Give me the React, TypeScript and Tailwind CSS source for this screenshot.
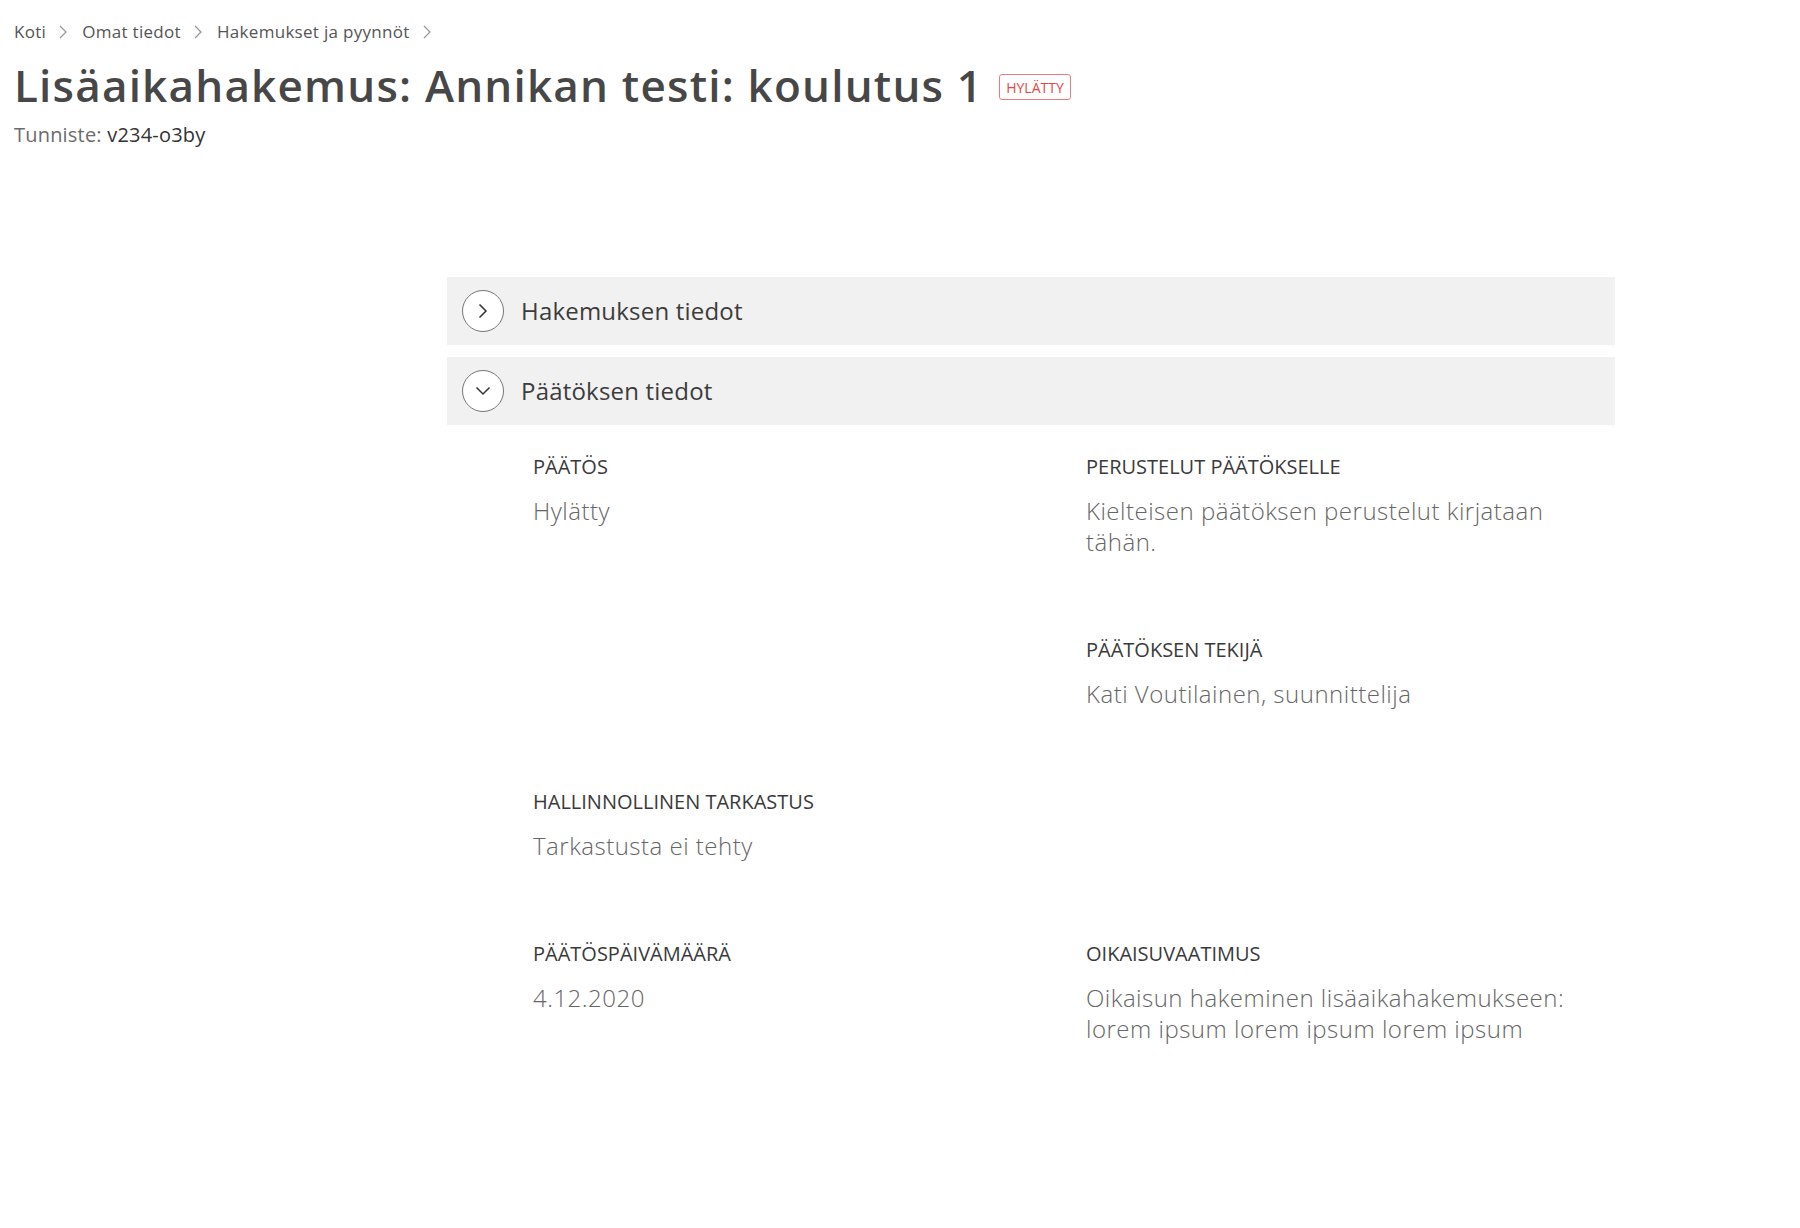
import React from "react";

const font = { fontFamily: "'Open Sans', 'Noto Sans', 'Liberation Sans', sans-serif" };

function Crumb({ label }: { label: string }) {
  return (
    <>
      <span>{label}</span>
      <svg width="10" height="16" viewBox="0 0 10 16" className="ml-[12px] mr-[14px] text-[#9a9a9a]">
        <polyline points="2,2 8,8 2,14" fill="none" stroke="currentColor" strokeWidth="1.3" />
      </svg>
    </>
  );
}

function AccordionHeader({ title, open }: { title: string; open: boolean }) {
  return (
    <div className="flex h-[68px] items-center bg-[#f1f1f1] pl-[15px]">
      <div className="flex h-[42px] w-[42px] items-center justify-center rounded-full border-[1.5px] border-[#777] bg-white">
        {open ? (
          <svg width="16" height="10" viewBox="0 0 16 10">
            <polyline points="1.5,1.5 8,8 14.5,1.5" fill="none" stroke="#333" strokeWidth="1.5" />
          </svg>
        ) : (
          <svg width="10" height="16" viewBox="0 0 10 16">
            <polyline points="1.5,1.5 8,8 1.5,14.5" fill="none" stroke="#333" strokeWidth="1.5" />
          </svg>
        )}
      </div>
      <span className="ml-[17px] text-[24px] font-medium tracking-[0.2px] text-[#3c3c3c]">{title}</span>
    </div>
  );
}

function Field({ label, children }: { label: string; children: React.ReactNode }) {
  return (
    <div>
      <div className="text-[20px] leading-[28px] font-medium uppercase text-[#3a3a3a]">{label}</div>
      <div className="mt-[14px] text-[24px] leading-[31px] font-light tracking-[0.5px] text-[#666]">
        {children}
      </div>
    </div>
  );
}

export default function App() {
  return (
    <main className="min-h-screen bg-white" style={font}>
      <div className="px-[14px] pt-[20px]">
        {/* murupolku */}
        <nav className="flex items-center text-[17px] leading-[24px] tracking-[0.3px] text-[#555]">
          <Crumb label="Koti" />
          <Crumb label="Omat tiedot" />
          <Crumb label="Hakemukset ja pyynnöt" />
        </nav>

        <div className="mt-[15px] flex items-center">
          <h1 className="text-[44px] leading-[52px] font-semibold tracking-[1.2px] text-[#474747]">
            Lisäaikahakemus: Annikan testi: koulutus 1
          </h1>
          <span className="ml-[16px] mt-[4px] flex h-[26px] items-center rounded-[3px] border border-[#f07a7a] px-[6px] text-[14px] text-[#e04848]">
            HYLÄTTY
          </span>
        </div>

        <div className="mt-[10px] text-[20px] leading-[28px] tracking-[0.2px] text-[#6b6b6b]">
          Tunniste: <span className="text-[#333]">v234-o3by</span>
        </div>
      </div>

      <section className="ml-[447px] mt-[128px] w-[1168px]">
        <AccordionHeader title="Hakemuksen tiedot" open={false} />
        <div className="mt-[12px]">
          <AccordionHeader title="Päätöksen tiedot" open={true} />
        </div>

        <div className="grid grid-cols-[553px_500px] gap-y-[79px] pl-[86px] pt-[28px]">
          <Field label="Päätös">Hylätty</Field>
          <Field label="Perustelut päätökselle">Kielteisen päätöksen perustelut kirjataan tähän.</Field>

          <div />
          <Field label="Päätöksen tekijä">Kati Voutilainen, suunnittelija</Field>

          <Field label="Hallinnollinen tarkastus">Tarkastusta ei tehty</Field>
          <div />

          <Field label="Päätöspäivämäärä">4.12.2020</Field>
          <Field label="Oikaisuvaatimus">
            Oikaisun hakeminen lisäaikahakemukseen: lorem ipsum lorem ipsum lorem ipsum
          </Field>
        </div>
      </section>
    </main>
  );
}
